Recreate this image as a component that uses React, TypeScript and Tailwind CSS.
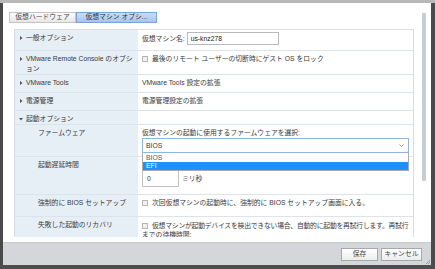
import React from "react";

const font = { fontFamily: '"Liberation Sans", "Noto Sans CJK JP", sans-serif' };

function Tri({ open = false }: { open?: boolean }) {
  return (
    <svg width="4" height="4" viewBox="0 0 4 4" className="shrink-0 mr-[3px] mt-[3px]">
      {open ? <path d="M0 1 L4 1 L2 3.5 Z" fill="#555" /> : <path d="M1 0 L3.5 2 L1 4 Z" fill="#555" />}
    </svg>
  );
}

function Check() {
  return <span className="inline-block w-[6px] h-[6px] border border-[#b5b5b5] bg-[#f0f0f0] mr-[4px] mt-[2px] shrink-0" />;
}

function Row({
  h,
  label,
  children,
  tri,
  sub,
  last,
}: {
  h: string;
  label: React.ReactNode;
  children?: React.ReactNode;
  tri?: "open" | "closed";
  sub?: boolean;
  last?: boolean;
}) {
  return (
    <div className={`flex ${h} ${last ? "" : "border-b border-[#dde3ea]"}`}>
      <div className={`w-[123px] shrink-0 bg-[#e6eef6] flex items-start pt-[3px] pr-[8px] ${sub ? "pl-[23px]" : "pl-[4px]"}`}>
        {tri && <Tri open={tri === "open"} />}
        <div className="leading-[10px] whitespace-nowrap">{label}</div>
      </div>
      <div className="flex-1 min-w-0 pl-[4px] pt-[3px] leading-[10px]">{children}</div>
    </div>
  );
}

export default function App() {
  return (
    <div className="w-[435px] h-[269px] overflow-hidden bg-[#4d4d4d] text-[#3a3a3a] text-[6.8px]" style={font}>
      <div className="h-[3px] bg-[#b8b8b8]" />
      <div className="flex">
        <div className="w-[3px] shrink-0 bg-[#4a4a4a]" />
        <div className="w-[428px] h-[262px] bg-white flex flex-col relative">
          <div className="flex h-[239px]">
            <div className="w-[415px] flex flex-col pl-[6px] pt-[9px]">
              <div className="flex h-[11px]">
                <div className="w-[67px] border border-[#c4c4c4] bg-gradient-to-b from-[#fbfbfb] to-[#e7e7e7] flex items-center justify-center text-[#444]">
                  仮想ハードウェア
                </div>
                <div className="w-[81px] border border-[#7aa3d8] bg-gradient-to-b from-[#c7dcf7] to-[#a6c6ef] flex items-center justify-center text-[#333]">
                  仮想マシン オプシ...
                </div>
              </div>
              <div className="ml-[5px] mt-[6px] w-[400px] h-[208px] overflow-hidden">
                <div className="border border-[#d8dde3]">
                  <Row h="h-[21px]" tri="closed" label="一般オプション">
                    <div className="flex items-center -mt-[1px]">
                      <span>仮想マシン名:</span>
                      <div className="ml-[2px] w-[92px] h-[13px] border border-[#b9b9b9] flex items-center pl-[3px] text-[#222]">
                        us-knz278
                      </div>
                    </div>
                  </Row>
                  <Row
                    h="h-[24px]"
                    tri="closed"
                    label={
                      <>
                        VMware Remote Console のオプシ
                        <br />
                        ョン
                      </>
                    }
                  >
                    <div className="flex items-start">
                      <Check />
                      <span>最後のリモート ユーザーの切断時にゲスト OS をロック</span>
                    </div>
                  </Row>
                  <Row h="h-[18px]" tri="closed" label="VMware Tools">
                    VMware Tools 設定の拡張
                  </Row>
                  <Row h="h-[18px]" tri="closed" label="電源管理">
                    電源管理設定の拡張
                  </Row>
                  <Row h="h-[14px]" tri="open" label="起動オプション" />
                  <Row h="h-[32px]" sub label="ファームウェア">
                    <div className="relative">
                      <div>仮想マシンの起動に使用するファームウェアを選択:</div>
                      <div className="mr-[4px] h-[15px] border border-[#8eb4e3] flex items-center justify-between pl-[3px] pr-[4px] bg-white">
                        <span>BIOS</span>
                        <svg width="5" height="3" viewBox="0 0 5 3">
                          <path d="M0.5 0.5 L2.5 2.5 L4.5 0.5" stroke="#888" strokeWidth="0.8" fill="none" />
                        </svg>
                      </div>
                      <div className="absolute left-0 right-[4px] top-[25px] z-10 bg-white border-x border-b border-[#a9a9a9]">
                        <div className="h-[9px] pl-[3px] leading-[9px] text-[#555]">BIOS</div>
                        <div className="h-[8px] pl-[3px] leading-[8px] bg-[#1e90ff] text-white">EFI</div>
                      </div>
                    </div>
                  </Row>
                  <Row h="h-[38px]" sub label="起動遅延時間">
                    <div className="flex items-center mt-[10px]">
                      <div className="w-[37px] h-[17px] border border-[#c2c2c2] flex items-center pl-[4px]">0</div>
                      <span className="ml-[3px]">ミリ秒</span>
                    </div>
                  </Row>
                  <Row h="h-[22px]" sub label="強制的に BIOS セットアップ">
                    <div className="flex items-start">
                      <Check />
                      <span>次回仮想マシンの起動時に、強制的に BIOS セットアップ画面に入る。</span>
                    </div>
                  </Row>
                  <Row h="h-[24px]" sub last label="失敗した起動のリカバリ">
                    <div className="pt-[1px]">
                      <div className="flex items-start whitespace-nowrap">
                        <Check />
                        <span className="tracking-[-0.2px]">仮想マシンが起動デバイスを検出できない場合、自動的に起動を再試行します。再試行</span>
                      </div>
                      <div className="-mt-[1px]">までの待機時間:</div>
                    </div>
                  </Row>
                </div>
              </div>
            </div>
            <div className="pl-[4px] pt-[10px]">
              <div className="w-[4px] h-[168px] bg-[#c9ccd0] rounded-[1px]" />
            </div>
          </div>
          <div className="h-[23px] bg-[#d4d6d9] border-t border-[#c8cacd] flex items-center justify-end pr-[9px] gap-[3px]">
            <div className="w-[37px] h-[13px] border border-[#a8a8a8] bg-gradient-to-b from-white to-[#ececec] flex items-center justify-center text-[#444]">
              保存
            </div>
            <div className="w-[41px] h-[13px] border border-[#a8a8a8] bg-gradient-to-b from-white to-[#ececec] flex items-center justify-center text-[#444]">
              キャンセル
            </div>
          </div>
          <svg width="5" height="5" viewBox="0 0 5 5" className="absolute right-[1px] bottom-[1px]">
            <path d="M5 1 L1 5 M5 3 L3 5" stroke="#888" strokeWidth="0.7" />
          </svg>
        </div>
        <div className="flex-1 bg-[#4a4a4a]" />
      </div>
    </div>
  );
}
